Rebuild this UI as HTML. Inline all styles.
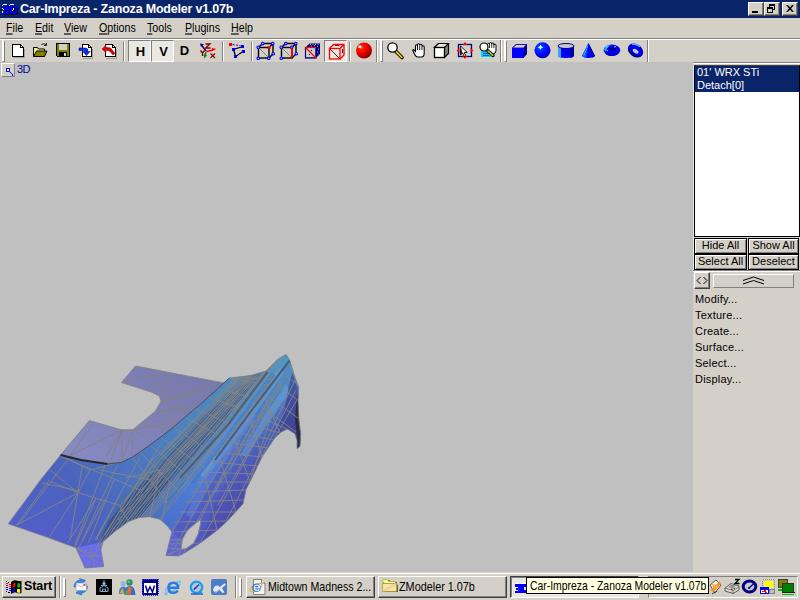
<!DOCTYPE html>
<html>
<head>
<meta charset="utf-8">
<title>Car-Impreza - Zanoza Modeler v1.07b</title>
<style>
html,body{margin:0;padding:0;}
body{width:800px;height:600px;overflow:hidden;background:#d4d0c8;position:relative;font-family:"Liberation Sans",sans-serif;font-size:11px;color:#000;}
.abs{position:absolute;}
#titlebar{left:0;top:0;width:800px;height:18px;background:#0a246a;}
#title{left:20px;top:2px;color:#fff;font-weight:bold;font-size:12.5px;white-space:nowrap;letter-spacing:-0.2px;}
.cap{top:2px;width:16px;height:14px;background:#d4d0c8;box-sizing:border-box;border:1px solid;border-color:#fff #404040 #404040 #fff;box-shadow:inset -1px -1px 0 #808080;}
#menubar{left:0;top:18px;width:800px;height:20px;background:#d4d0c8;}
.mi{top:21px;font-size:11px;white-space:nowrap;transform:scale(0.97,1.13);transform-origin:0 0;}
.mi u{text-decoration:underline;}
#tbline1{left:0;top:38px;width:800px;height:1px;background:#808080;}
#tbline2{left:0;top:39px;width:800px;height:1px;background:#fff;}
#toolbar{left:0;top:40px;width:800px;height:22px;background:#d4d0c8;}
.sep{top:42px;width:1px;height:19px;background:#808080;box-shadow:1px 0 0 #fff;}
.grip{top:42px;width:2px;height:19px;background:#fff;box-shadow:1px 1px 0 #808080;}
.tbchk{top:40px;width:23px;height:22px;box-sizing:border-box;border:1px solid;border-color:#808080 #fff #fff #808080;background:#eae8e3;}
.tbtxt{top:44px;font-weight:bold;font-size:13px;width:23px;text-align:center;}
#viewport{left:0;top:62px;width:693px;height:511px;background:#c0c0c0;overflow:hidden;}
#panel{left:693px;top:62px;width:107px;height:511px;background:#d4d0c8;}
#listbox{left:694px;top:65px;width:106px;height:172px;box-sizing:border-box;background:#fff;border:1px solid #000;border-top-color:#404040;}
.lsel{left:695px;width:104px;height:13px;background:#0a246a;color:#fff;font-size:11px;line-height:13px;white-space:nowrap;padding-left:2px;box-sizing:border-box;}
.btn{height:16px;box-sizing:border-box;border:1px solid #000;background:#d4d0c8;font-size:11px;line-height:13px;text-align:center;white-space:nowrap;box-shadow:inset 1px 1px 0 #fff, inset -1px -1px 0 #808080;}
.pm{left:695px;font-size:11px;white-space:nowrap;letter-spacing:0.2px;}
#taskbar{left:0;top:572px;width:800px;height:28px;background:#d4d0c8;}
.tbtn{top:576px;height:22px;box-sizing:border-box;border:1px solid;border-color:#fff #404040 #404040 #fff;box-shadow:inset -1px -1px 0 #808080;background:#d4d0c8;font-size:12px;white-space:nowrap;}
</style>
</head>
<body>
<!-- TITLE BAR -->
<div id="titlebar" class="abs"></div>
<svg class="abs" style="left:2px;top:3px" width="17" height="12" viewBox="2 3 17 12" shape-rendering="crispEdges">
<path d="M3 6h6v8h-6v-2h3v-1h-2v-2h2v-1h-3z" fill="#000" transform="translate(1,1)"/>
<path d="M10 6h5l2 2v4l-2 2h-5z" fill="#000" transform="translate(1,1)"/>
<path d="M3 5h5l1 1v2l-1 1l1 1v3l-1 1h-6v-2h4v-2h-3v-2h3v-1h-3z" fill="#0000ff"/>
<path d="M10 5h5l2 2v5l-2 2h-5zM12 7v5h2l1-1v-3l-1-1z" fill="#0000ff" fill-rule="evenodd"/>
<path d="M3 4h4v1h-4zM2 5h1v1h-1zM2 8h1v1h-1zM3 9h1v1h-1zM2 11h1v2h-1zM10 4h4v1h-4zM9 5h1v1h-1zM13 8h1v2h-1zM12 10h1v1h-1z" fill="#fff"/>
</svg>
<div id="title" class="abs">Car-Impreza - Zanoza Modeler v1.07b</div>
<div class="abs cap" style="left:748px"></div>
<div class="abs cap" style="left:764px"></div>
<div class="abs cap" style="left:782px"></div>
<svg class="abs" style="left:748px;top:2px" width="50" height="14" viewBox="0 0 50 14" shape-rendering="crispEdges">
<rect x="4" y="9" width="6" height="2" fill="#000"/>
<path d="M21 2h6v6h-2v-1h1v-3h-4v1h-1z" fill="#000"/>
<path d="M19 5h6v6h-6zM20 7v3h4v-3z" fill="#000" fill-rule="evenodd"/>
<path d="M38 3h2l2 2.500 2-2.500h2l-3 3.500 3 3.500h-2l-2-2.500-2 2.500h-2l3-3.500z" fill="#000" shape-rendering="auto"/>
</svg>

<!-- MENU BAR -->
<div id="menubar" class="abs"></div>
<div class="abs mi" style="left:6px"><u>F</u>ile</div>
<div class="abs mi" style="left:35px"><u>E</u>dit</div>
<div class="abs mi" style="left:64px"><u>V</u>iew</div>
<div class="abs mi" style="left:99px"><u>O</u>ptions</div>
<div class="abs mi" style="left:147px"><u>T</u>ools</div>
<div class="abs mi" style="left:185px"><u>P</u>lugins</div>
<div class="abs mi" style="left:231px"><u>H</u>elp</div>

<!-- TOOLBAR -->
<div id="tbline1" class="abs"></div>
<div id="tbline2" class="abs"></div>
<div id="toolbar" class="abs"></div>
<!--TB_START--><!-- toolbar grips / separators -->
<div class="abs grip" style="left:2px;top:40px;height:21px"></div>
<div class="abs sep" style="left:123px"></div>
<div class="abs sep" style="left:222px"></div>
<div class="abs sep" style="left:251px"></div>
<div class="abs sep" style="left:349px"></div>
<div class="abs sep" style="left:376px;top:40px;height:22px"></div>
<div class="abs grip" style="left:380px;top:40px;height:21px"></div>
<div class="abs sep" style="left:500px;top:40px;height:22px"></div>
<div class="abs grip" style="left:504px;top:40px;height:21px"></div>
<div class="abs sep" style="left:647px;top:40px;height:22px"></div>
<!-- checked buttons -->
<div class="abs tbchk" style="left:128px"></div>
<div class="abs tbchk" style="left:151px"></div>
<div class="abs tbchk" style="left:324px"></div>
<div class="abs tbtxt" style="left:129px;top:44px">H</div>
<div class="abs tbtxt" style="left:152px;top:44px">V</div>
<div class="abs tbtxt" style="left:173px;top:43px">D</div>
<svg class="abs" style="left:0;top:39px" width="660" height="24" viewBox="0 39 660 24">
<!-- new -->
<g shape-rendering="crispEdges">
<path d="M12.5 44.5h8l3 3v9h-11z" fill="#fff" stroke="#000"/>
<path d="M20.5 44.5v3h3" fill="none" stroke="#000"/>
<path d="M13 57.5h11.5v-9" fill="none" stroke="#808080" opacity="0.6"/>
</g>
<!-- open -->
<g>
<path d="M33.5 47.5h4l1 1.5h6v7h-11z" fill="#f4f08c" stroke="#000" stroke-width="1"/>
<path d="M33.5 56.5l3-5.5h10.5l-2.5 5.5z" fill="#808000" stroke="#000" stroke-width="1"/>
<path d="M41.5 44.5q3-1.8 4.5 0.5M46.5 43v2.5h-2.5" fill="none" stroke="#202020" stroke-width="1"/>
</g>
<!-- save -->
<g shape-rendering="crispEdges">
<path d="M56.5 43.5h13v13h-12l-1-1z" fill="#808000" stroke="#000"/>
<rect x="59" y="44" width="8" height="6" fill="#d4d0c8"/>
<rect x="59" y="52" width="8" height="5" fill="#000"/>
<rect x="64" y="53" width="2" height="3" fill="#d4d0c8"/>
</g>
<!-- import -->
<g>
<path d="M82.5 44.5h6l3 3v9h-9z" fill="#fff" stroke="#000" shape-rendering="crispEdges"/>
<path d="M88.5 44.5v3h3" fill="none" stroke="#000" shape-rendering="crispEdges"/>
<path d="M83 58h9.5v-9" fill="none" stroke="#808080" opacity="0.6" shape-rendering="crispEdges"/>
<path d="M79 48h6.5q2.5 0 2.5 3v0.5h2.2l-3.7 4-3.7-4h2.2q0-1-1-1h-5z" fill="#0030e8" stroke="#000080" stroke-width="0.5"/>
</g>
<!-- export -->
<g>
<path d="M105.5 44.5h7l3 3v9h-10z" fill="#fff" stroke="#000" shape-rendering="crispEdges"/>
<path d="M112.5 44.5v3h3" fill="none" stroke="#000" shape-rendering="crispEdges"/>
<path d="M106 58h10.500v-9" fill="none" stroke="#808080" opacity="0.6" shape-rendering="crispEdges"/>
<path d="M102 49l4-3.700v2.200h2.500q2 0 3.500 2l3 4-2 1.500-3-3.500q-1-1-2-1h-2v2.200z" fill="#d80000" stroke="#800000" stroke-width="0.5"/>
</g>
<!-- axes -->
<g fill="none">
<path d="M206 51L201.500 45" stroke="#000080" stroke-width="1.4"/>
<path d="M200 43.500l4 0.800-3 2.700z" fill="#000080"/>
<path d="M205.500 44h4.500l-4.500 4h5" stroke="#800000" stroke-width="1.3"/>
<path d="M206.500 51.500L213 50" stroke="#ff0000" stroke-width="1.3"/>
<path d="M216.500 49l-4.500-1v3z" fill="#ff0000"/>
<path d="M200.500 50.500l2 2.500 2-2.500M202.500 53v3" stroke="#800000" stroke-width="1.3"/>
<path d="M206 52L205 55" stroke="#008000" stroke-width="1.4"/>
<path d="M203.500 54l3.500 1-2.500 3.500z" fill="#008000"/>
<path d="M210.500 53.500l4.500 4.500M215 53.500l-4.500 4.500" stroke="#800000" stroke-width="1.1"/>
</g>
<!-- polygon -->
<g>
<path d="M243 46.500L233.500 49.500L235.500 56.500L243 51.500" fill="none" stroke="#000" stroke-width="1.3"/>
<path d="M232.500 44.500L240.500 45.700" stroke="#0000ff" stroke-width="1" stroke-dasharray="2 1.500" fill="none"/>
<g shape-rendering="crispEdges">
<rect x="229" y="43" width="3" height="3" fill="#ff0000"/>
<rect x="241" y="45" width="3" height="3" fill="#0000ff"/>
<rect x="232" y="48" width="3" height="3" fill="#0000ff"/>
<rect x="242" y="50" width="3" height="3" fill="#0000ff"/>
<rect x="234" y="55" width="3" height="3" fill="#0000ff"/>
</g>
</g>
<!-- cube1 -->
<g id="cubeA" fill="none" stroke="#000" stroke-width="1.4">
<rect x="258.500" y="47.500" width="10.500" height="10.500"/>
<path d="M258.500 47.500l4-4h10.500v10.500l-4 4M269 47.500l4-4"/>
<path d="M259 48l10 10" stroke="#808080" stroke-width="1"/>
</g>
<g fill="#c8d0f0" stroke="#0000ff" stroke-width="1.100">
<circle cx="258.25" cy="47.25" r="1.300"/><circle cx="262.75" cy="43.55" r="1.300"/><circle cx="272.75" cy="43.55" r="1.300"/>
<circle cx="273.25" cy="53.75" r="1.300"/><circle cx="258.25" cy="58.25" r="1.300"/><circle cx="268.75" cy="58.25" r="1.300"/>
</g>
<rect x="267.500" y="46" width="3" height="3" fill="#ff0000"/>
<!-- cube2 -->
<g fill="none" stroke="#000" stroke-width="1.4">
<rect x="281.500" y="47.500" width="10.500" height="10.500"/>
<path d="M281.500 47.500l4-4h10.500v10.500l-4 4M292 47.500l4-4"/>
<path d="M282 48l10 10" stroke="#808080" stroke-width="1"/>
</g>
<g fill="#c8d0f0" stroke="#0000ff" stroke-width="1.100">
<circle cx="281.25" cy="47.25" r="1.300"/><circle cx="285.75" cy="43.55" r="1.300"/><circle cx="295.75" cy="43.55" r="1.300"/>
<circle cx="296.25" cy="53.75" r="1.300"/><circle cx="281.25" cy="58.25" r="1.300"/><circle cx="291.75" cy="47.25" r="1.300"/>
</g>
<path d="M291.700 47.500v11" stroke="#ff0000" stroke-width="1.500"/>
<!-- cube3 navy -->
<g>
<path d="M305.500 47.500l4-4h10.500v10.500l-4 4h-10.500z" fill="#000080"/>
<rect x="306" y="48" width="9.500" height="9.500" fill="#d4d0c8"/>
<path d="M310 44.500h9M311 46h1M314 45.500h1M317 46.500h1M318 49h1M317 52h1M318.500 54h0.500" stroke="#d4d0c8" stroke-width="0.8" stroke-dasharray="1 1.500"/>
<rect x="305.500" y="47.500" width="10.500" height="10.500" fill="none" stroke="#000080" stroke-width="1.200"/>
<path d="M305.500 47.500h10.500M305.500 47.500l10.500 10.500" stroke="#ff0000" stroke-width="1.200" fill="none"/>
<rect x="311" y="50" width="1" height="1" fill="#000080"/><rect x="309" y="54" width="1" height="1" fill="#000080"/>
</g>
<!-- cube4 red (checked) -->
<g fill="none" stroke="#ff0000" stroke-width="1.300">
<rect x="329.500" y="48.500" width="10.500" height="10.500"/>
<path d="M329.500 48.500l4-4h10.500v10.500l-4 4M340 48.500l4-4"/>
<path d="M330 49l10 10" stroke="#800000" stroke-width="1"/>
<path d="M335 45.500h4M342.500 49v4" stroke="#800000" stroke-width="1"/>
</g>
<!-- red sphere -->
<defs>
<radialGradient id="rs" cx="0.32" cy="0.3" r="0.8"><stop offset="0" stop-color="#ffb0a0"/><stop offset="0.15" stop-color="#ff2000"/><stop offset="0.55" stop-color="#e00000"/><stop offset="1" stop-color="#780000"/></radialGradient>
<radialGradient id="bs" cx="0.35" cy="0.32" r="0.8"><stop offset="0" stop-color="#c0ffff"/><stop offset="0.15" stop-color="#0040ff"/><stop offset="0.6" stop-color="#0000ff"/><stop offset="1" stop-color="#0000a0"/></radialGradient>
</defs>
<circle cx="364" cy="50.500" r="8" fill="url(#rs)"/>
<rect x="358.500" y="45.500" width="2.500" height="2.500" fill="#fff"/>
<!-- magnifier -->
<g>
<path d="M396 51.500l6 6" stroke="#000" stroke-width="3.600" stroke-linecap="round"/>
<path d="M396.500 52l5.300 5.300" stroke="#d8d020" stroke-width="1.800" stroke-linecap="round"/>
<circle cx="392.500" cy="47.500" r="4.700" fill="#fff" stroke="#000" stroke-width="1.300"/>
</g>
<!-- hand -->
<path d="M413.500 49.500L415.500 51.500L415.500 46Q415.500 44.800 416.500 44.800Q417.500 44.800 417.500 46L417.500 45Q417.500 43.800 418.600 43.800Q419.700 43.800 419.700 45L419.700 45.400Q419.700 44.200 420.800 44.200Q422 44.200 422 45.500L422 46.800Q422 45.800 423.100 45.800Q424.200 45.800 424.200 47L424.200 53Q424.200 57 421.500 57L418 57Q416 57 415 55L413 51Q412.500 49.500 413.500 49.500Z" fill="#fff" stroke="#000" stroke-width="1.100"/>
<path d="M417.500 46v4M419.700 45.500v4.500M422 46.800v3.200" stroke="#000" stroke-width="0.900"/>
<!-- box -->
<g>
<path d="M434.500 47.500l4-4h10v10l-4 4z" fill="#808080" stroke="#000" stroke-width="1.200"/>
<path d="M434.500 47.500l4-4h10l-4 4z" fill="#e8e8e8" stroke="#000" stroke-width="1.200"/>
<rect x="434.500" y="47.500" width="10" height="10" fill="#fff" stroke="#000" stroke-width="1.300"/>
</g>
<!-- select -->
<g>
<rect x="458.500" y="44.500" width="13" height="12" fill="#d4d0c8" stroke="#000080" stroke-width="1.300"/>
<path d="M465 42l2.500 3h-5zM465 59l2.500-3h-5zM456.500 50.500l3-2.500v5zM473.500 50.500l-3-2.500v5z" fill="#ff0000"/>
<path d="M460.500 46v9l2.200-2 1.500 3.500 1.500-0.700-1.500-3.300h3z" fill="#fff" stroke="#000" stroke-width="0.900"/>
<path d="M460.500 46v9l2-2z" fill="#202020"/>
</g>
<!-- magnifier+hand -->
<g>
<rect x="481" y="51" width="13.500" height="6" fill="#00d8f0"/>
<path d="M483 53.500h8M483 55.500h6" stroke="#0040ff" stroke-width="1"/>
<path d="M487.500 50v-5.500q0-1.200 1-1.200t1 1.200v-0.700q0-1.200 1.100-1.200t1.100 1.200v0.400q0-1.200 1.100-1.200t1.100 1.200v1q0-1 1-1t1.100 1.200v5q0 3.500-3 3.500h-3z" fill="#fff" stroke="#000" stroke-width="1"/><path d="M489.500 44.500v3.500M491.700 44v4M493.900 44.500v3.500" stroke="#000" stroke-width="0.800"/>
<path d="M487.500 50.500l5.500 5" stroke="#000" stroke-width="3.200" stroke-linecap="round"/>
<path d="M488 51l4.800 4.300" stroke="#d8d020" stroke-width="1.600" stroke-linecap="round"/>
<circle cx="484" cy="47" r="4" fill="#fff" stroke="#000" stroke-width="1.200"/>
</g>
<!-- blue cube -->
<g>
<path d="M512 48l4-4h11v10l-3.500 4z" fill="#000090"/>
<path d="M512.500 48l3.700-3.500h10.300l-3 3.500z" fill="#d4d0c8" stroke="#0000c0" stroke-width="0.800"/>
<rect x="512" y="48" width="12" height="10" fill="#0000ff"/>
</g>
<!-- blue sphere -->
<circle cx="542.500" cy="50.300" r="8" fill="url(#bs)"/>
<path d="M540.500 44.500l1 2 2 0.800-2 0.800-1 2-1-2-2-0.800 2-0.800z" fill="#c8ffff"/>
<!-- cylinder -->
<g>
<path d="M558 46v9.500q0 2.500 8 2.500t8-2.500v-9.500z" fill="#0000f0"/>
<path d="M558 46v9.500q0 1.500 3 2.200v-10z" fill="#40a0ff"/>
<path d="M570 47.500v10.300q4-0.500 4-2.300v-9.500z" fill="#0000a0"/>
<ellipse cx="566" cy="46" rx="8" ry="2.500" fill="#c8c8d0" stroke="#000080" stroke-width="1"/>
</g>
<!-- cone -->
<g>
<path d="M588.500 43l6.500 13q-2 2-6.500 2t-6.500-2z" fill="#0000f0"/>
<path d="M588.500 43l-6.500 13q1.500 1.500 4 1.800z" fill="#0060ff"/>
<path d="M587.500 46.500l-4 9.500" stroke="#40e0ff" stroke-width="1" stroke-dasharray="1.500 1"/>
<path d="M588.500 43l6.500 13q-1 1.200-3 1.600z" fill="#0000b0"/>
</g>
<!-- torus -->
<g>
<ellipse cx="612" cy="50.300" rx="8.300" ry="5.700" fill="#0000f0"/>
<path d="M604 49q2-4.500 8-4.500q-5 2-6 7q-1.500-0.500-2-2.500z" fill="#20a0ff"/>
<ellipse cx="612.500" cy="48.700" rx="3.500" ry="1.600" fill="#000080"/>
<path d="M606 47.500l2-1.500M606.500 50l1.500 1M614 47l2-0.500" stroke="#60e8ff" stroke-width="1"/>
<path d="M604.500 53q3 3.500 8 3t7-4q-2 2-7 2.500t-8-1.500z" fill="#0000a8"/>
</g>
<!-- torus 2 -->
<g transform="rotate(35 635.500 50.500)">
<ellipse cx="635.500" cy="50.500" rx="8.300" ry="6.300" fill="#000090"/>
<ellipse cx="635.500" cy="49.800" rx="7.300" ry="5" fill="#0000f0"/>
<ellipse cx="636" cy="51" rx="3.300" ry="1.800" fill="#c8c8d8"/>
<path d="M629 47.500q3-3 8-2.500" stroke="#50c0ff" stroke-width="1.300" fill="none"/>
<path d="M629.500 53.500q4 3.500 10 1" stroke="#000070" stroke-width="1.300" fill="none"/>
</g>
</svg>
<!-- 3D view label -->
<div class="abs" style="z-index:5;left:1px;top:63px;width:14px;height:14px;box-sizing:border-box;background:#d4d0c8;border:1px solid;border-color:#fff #808080 #808080 #fff"></div>
<svg class="abs" style="z-index:5;left:1px;top:63px" width="14" height="14" viewBox="0 0 14 14" shape-rendering="crispEdges">
<rect x="5.500" y="5.500" width="3" height="3" fill="#ffffd0" stroke="#0000ff" stroke-width="1"/>
<path d="M9 9h1v1h-1zM10 10h1v1h-1zM11 11h1v2h-1z" fill="#0000ff"/>
</svg>
<div class="abs" style="z-index:5;left:17px;top:63px;font-size:11px;color:#000098;white-space:nowrap;letter-spacing:-0.700px">3D</div>
<!--TB_END-->

<!-- VIEWPORT -->
<div id="viewport" class="abs">
<!--MODEL_START--><svg class="abs" style="left:0;top:-62px" width="693" height="635" viewBox="0 0 693 635">
<defs>
<linearGradient id="gflap" gradientUnits="userSpaceOnUse" x1="180" y1="365" x2="100" y2="465">
<stop offset="0" stop-color="#7879b1"/><stop offset="1" stop-color="#8688c0"/></linearGradient>
<linearGradient id="gbody" gradientUnits="userSpaceOnUse" x1="280" y1="360" x2="30" y2="540">
<stop offset="0" stop-color="#4a92c6"/><stop offset="0.4" stop-color="#4a82c2"/><stop offset="0.62" stop-color="#4a72c0"/><stop offset="0.8" stop-color="#4a62be"/><stop offset="1" stop-color="#5060c8"/></linearGradient>
<linearGradient id="gright" gradientUnits="userSpaceOnUse" x1="290" y1="365" x2="200" y2="545">
<stop offset="0" stop-color="#4a8ec8"/><stop offset="0.3" stop-color="#4a7cc8"/><stop offset="0.6" stop-color="#4c64c4"/><stop offset="1" stop-color="#5058c4"/></linearGradient>
<linearGradient id="gviolet" gradientUnits="userSpaceOnUse" x1="240" y1="440" x2="275" y2="465">
<stop offset="0" stop-color="#4c4ab0" stop-opacity="0"/><stop offset="1" stop-color="#4a44a4" stop-opacity="0.9"/></linearGradient>
<linearGradient id="gbright" gradientUnits="userSpaceOnUse" x1="285" y1="360" x2="170" y2="520">
<stop offset="0" stop-color="#4a98cc"/><stop offset="0.5" stop-color="#5590dc"/><stop offset="1" stop-color="#4a70d0"/></linearGradient>
<clipPath id="cbody"><path id="pbody" clip-rule="evenodd" fill-rule="evenodd" d="M229.4 378L250 375.6L266 371L277.5 359.4L286 354.4L289.4 359.4L295 377.5L298.8 387.5L298 400L298.8 418.8L300.6 433.8L300 446.3L297 448.8L297 440L295 433.8L287.5 429L281.3 432L275 437.5L270 445L262.5 456L257.5 466L255.8 470L246 489.5L243 503.8L226.5 521.8L217.5 530L199.5 543.5L184.5 553L178.5 556L166 555.5L172 532L167.5 526L160 519.3L149.5 516.7L139 517.5L128.5 521.5L115 531.3L103 541.8L100.8 550L103.8 566.5L85 568L76 547.8L46.5 537L8.3 523.8L40.5 480L60.6 455L81 460L107.5 464L121 462.5L132.5 457L150 445L170 430L187.5 415L202.5 402.5L217.5 388.8ZM201 518.8L187.5 530L182.3 539L180.8 549.5L186 548.8L193.5 543.5L198 534.5L200.3 525.5Z"/></clipPath>
</defs>
<!-- purple flap + lower-left panel -->
<path d="M135.6 366L224 383L217.5 388.8L208.8 397L202.5 402.5L187.5 415L170 430L150 445L132.5 457L121 462.5L107.5 464L81 460L60.6 455L89.4 420.6L121.9 430L132.5 430L155.6 411L161 401L159.4 396L151.3 392L121.5 382.5Z" fill="url(#gflap)"/>
<!-- blue body -->
<use href="#pbody" fill="url(#gbody)"/>
<g clip-path="url(#cbody)">
<!-- flank (right of 2nd ridge) -->
<path d="M289.4 360.600L250 412.500L215 460L172 532L160 560L200 560L310 460L310 380Z" fill="url(#gright)"/>
<path d="M296 385L302 450L250 500L200 545L215 500L250 440Z" fill="url(#gviolet)"/>
<path d="M286 384L262 420L240 455L246 457L268 424L290 392Z" fill="#6aa8e8" opacity="0.450"/>
<!-- bright area between ridges -->
<path d="M267.500 372.500L277.500 359.400L286 354.400L289.400 360.600L250 412.500L215 460L172 532L167.500 526L160 519.300L202 460L225 430Z" fill="url(#gbright)"/>
<path d="M280 368L238 425L200 475L206 478L245 428L284 372Z" fill="#66acec" opacity="0.550"/>
<path d="M272 372L228 432L190 482L194 484L232 435L275 376Z" fill="#3f6fb4" opacity="0.450"/>
<path d="M252 410L225 447L196 490L186 515L192 518L205 492L232 452L256 416Z" fill="#5a8ce4" opacity="0.500"/>
<!-- dark strip -->
<path d="M252 375.500L262 373L217 430L190 460L163 490L139 517.500L128.500 521.500L115 531.300L103 541.800L98 545L110.500 520L137.500 490L164.500 460L191.500 430L205 415Z" fill="#3b5e94" opacity="0.850"/>
<path d="M240 377L252 375.500L205 415L164.500 460L137.500 490L110 520L100 545L92 548L120 500L160 455Z" fill="#44709c" opacity="0.450"/>
<path d="M150 475L170 480L150 505L139 517.500L128.500 521.500L115 531.300L103 541.800L98 545L108 522L128 498Z" fill="#344a80" opacity="0.500"/>
<!-- far right dark -->
<path d="M292 372L300 395L301 450L292 440L284 428L274 440L284 410Z" fill="#3a3a88" opacity="0.600"/>
<path d="M297 395L301 400L301 450L296 450L297 436L295 420Z" fill="#2c2c40"/>
<!-- tab -->
<path d="M76 547.8L103 541.8L100.8 550L103.8 566.5L85 568Z" fill="#686cf2"/>
<path d="M166 555.5L172 532L182 540L180 550L190 545L184.5 553L178.5 556Z" fill="#6068e0" opacity="0.800"/>
<!-- bottom-left sheen -->
<path d="M8 524L46.500 537L76 548L103 541.800L96 530L60 515Z" fill="#585ccc" opacity="0.350"/>
</g>
<g fill="none" stroke="#828282" stroke-width="0.9">
<path d="M135.6 366L224 383M135.6 366L121.5 382.5L151.3 392L159.4 396L161 401L155.6 411L132.5 430L121.9 430L89.4 420.6L60.6 455"/>
<path d="M121.5 382.5L165 372.5M151 390L164 373M151 390L175 375M160 395L175 375M160 395L190 378.8M161 401L210 382.5M161 401L214 387M161 401L210 392M160 402.5L200 409M155.6 410.6L196 407.5M155.6 411L177.5 422.5M143.8 421L177.5 423M155.6 411L190 413M93.8 423L70 455.6M121.9 430L70 455.6M121.9 430L102.5 462.5M121.9 430L110 463M121.9 430L121.9 461M132.5 430L121.9 461M132.5 430L131.9 456M132.5 430L152 441M132.5 430L165 424M140 424L170 430M132.5 430L121.9 430"/>
</g>
<g fill="none" stroke="#868686" stroke-width="0.9" clip-path="url(#cbody)">
<path d="M49.5 480L16.5 525M51 482L78 492.8M78 492.8L120 505.5M16.5 525L78 492.8M78 492.8L49.5 537M78 492.8L90 470M96 498L67.5 543M96 498L75 547M105 499.5L78 549M114 480L88.5 543M120 495L96 540M60 456L140 490M50 470L77.5 492.5M67.5 460L19 524M82.5 465L70 540M105 465L75 545M117.5 465L82.5 540M140 457.5L95 540M160 445L105 535M90 470L120 462M90 470L60.6 455M42 483L80 491M120 505.5L150 470M120 505.5L128 521M100 470L150 480M125 478L160 470M241 377L140 480M250 375.6L150 485M256 374L120 512M262 372L112 530M267.5 372L128 520M246 376.5L135 497M259 373L118 520M252.5 375L146 492M236 377.5L160 455M272 365L160 500M277.5 359.4L165 510M282 357L180 490M238 377.3L152 460M152 460L96 548M240.3 376.8L155.8 460M155.8 460L100.2 545.6M242.6 376.3L159.7 460M159.7 460L104.3 543.2M244.9 375.9L163.5 460M163.5 460L108.5 540.8M247.2 375.4L167.4 460M167.4 460L112.6 538.5M249.5 374.9L171.2 460M171.2 460L116.8 536.1M251.8 374.4L175.1 460M175.1 460L120.9 533.7M254.1 373.9L178.9 460M178.9 460L125.1 531.3M256.4 373.5L182.8 460M182.8 460L129.2 528.9M258.7 373L186.6 460M186.6 460L133.4 526.5M261 372.5L190.5 460M190.5 460L137.5 524.2M263.3 372L194.3 460M194.3 460L141.7 521.8M265.6 371.5L198.2 460M198.2 460L145.8 519.4M267.9 371.1L202 460M202 460L150 517M289.4 360.6L200 470M200 470L160 519M286 355L215 460M215 460L172 532M217.5 388.8L262 400M208 397L250 412M195 409L240 428M184 417L228 440M172 426L215 455M160 437L205 468M150 445L192 480M140 452L180 492M132 457L168 503M160 470L150 516M170 482L162 520M229 378L268 385M240 377L275 380M291 365L225 470M225 470L178 556M293 372L240 470M240 470L200 543M295 380L255 465M255 465L226 521M296 390L262 456M297 400L275 437M288 362L232 445M232 445L190 520M190 520L170 556M284 380L210 500M210 500L184 553M278 400L218 505M270 420L243 503M277 370L297 384M270 380L298 400M262 392L298 418M255 402L296 432M248 412L287 429M240 422L280 433M232 432L274 440M225 442L268 448M218 452L262 457M210 462L258 466M204 472L254 474M198 482L250 482M192 492L246 490M186 502L244 500M180 512L236 512M175 522L226 521M172 532L217 530M168 544L200 543M262 392L280 433M248 412L262 457M232 432L250 482M218 452L236 512M204 472L217 530M280 385L262 420M268 400L246 445M254 420L230 470M240 440L215 492M76 547.8L103.8 566.5M85 568L103 541.8M90 545L95 567.5M80 556L102 556M76 548L104 558M166 555.5L190 545M168 548L186 549M170 540L182 540"/>
</g>
<use href="#pbody" fill="none" stroke="#7c7c84" stroke-width="0.8"/>
<path d="M201 518.8L187.5 530L182.3 539L180.8 549.5L186 548.8L193.5 543.5L198 534.5L200.3 525.5Z" fill="none" stroke="#84848c" stroke-width="0.8"/>
<path d="M107.5 464L121 462.5L132.5 457L150 445L170 430L187.5 415L202.5 402.5L217.5 388.8L229.4 378" fill="none" stroke="#3a3a46" stroke-width="0.9" opacity="0.85"/>
<path d="M60.6 455L81 460L107.5 464" fill="none" stroke="#26262e" stroke-width="2"/>
<path d="M289.4 360.6L250 412.5L215 460" fill="none" stroke="#485060" stroke-width="2" opacity="0.85"/>
<path d="M267.5 372L228 425L180 478" fill="none" stroke="#46506a" stroke-width="2.2" opacity="0.7"/>
</svg>
<!--MODEL_END-->
</div>

<!-- RIGHT PANEL -->
<div id="panel" class="abs"></div>
<div class="abs" style="left:693px;top:62px;width:107px;height:1px;background:#808080"></div><div class="abs" style="left:693px;top:63px;width:107px;height:1px;background:#fff"></div><div class="abs" style="left:693px;top:64px;width:1px;height:206px;background:#e8e6e0"></div>
<div id="listbox" class="abs"></div>
<div class="abs lsel" style="top:66px">01' WRX STi</div>
<div class="abs lsel" style="top:79px">Detach[0]</div>
<div class="abs btn" style="left:694px;top:238px;width:53px">Hide All</div>
<div class="abs btn" style="left:748px;top:238px;width:51px">Show All</div>
<div class="abs btn" style="left:694px;top:254px;width:53px">Select All</div>
<div class="abs btn" style="left:748px;top:254px;width:51px">Deselect</div>
<div class="abs" style="left:693px;top:270px;width:107px;height:1px;background:#808080"></div>
<div class="abs" style="left:693px;top:271px;width:107px;height:1px;background:#fff"></div>
<div class="abs" style="left:694px;top:272px;width:16px;height:17px;box-sizing:border-box;background:#d4d0c8;border:1px solid;border-color:#fff #404040 #404040 #fff;box-shadow:inset -1px -1px 0 #808080"></div>
<svg class="abs" style="left:694px;top:272px" width="16" height="17" viewBox="0 0 16 17"><path d="M6.500 5L3 8.500L6.500 12M9.500 5L13 8.500L9.500 12" fill="none" stroke="#000" stroke-width="1"/></svg>
<div class="abs" style="left:713px;top:274px;width:81px;height:14px;box-sizing:border-box;background:#d4d0c8;border:1px solid;border-color:#fff #808080 #808080 #fff"></div>
<svg class="abs" style="left:713px;top:274px" width="81" height="14" viewBox="0 0 81 14"><path d="M30 6.500L40.500 3L51 6.500M30 10L40.500 6.500L51 10" fill="none" stroke="#000" stroke-width="1"/></svg>
<div class="abs pm" style="top:293px">Modify...</div>
<div class="abs pm" style="top:309px">Texture...</div>
<div class="abs pm" style="top:325px">Create...</div>
<div class="abs pm" style="top:341px">Surface...</div>
<div class="abs pm" style="top:357px">Select...</div>
<div class="abs pm" style="top:373px">Display...</div>

<!-- TASKBAR -->
<div id="taskbar" class="abs"></div>
<div class="abs" style="left:0;top:573px;width:800px;height:1px;background:#fff"></div>
<!--TASK_START--><!-- start button -->
<div class="abs tbtn" style="left:2px;width:54px"></div>
<svg class="abs" style="left:5px;top:579px" width="18" height="16" viewBox="5 579 18 16">
<g shape-rendering="crispEdges">
<rect x="6" y="581" width="1" height="1" fill="#000"/><rect x="6" y="583" width="2" height="1" fill="#ff0000"/><rect x="6" y="585" width="2" height="1" fill="#ff0000"/>
<rect x="6" y="587" width="2" height="1" fill="#0000ff"/><rect x="6" y="589" width="2" height="1" fill="#0000ff"/><rect x="6" y="591" width="1" height="1" fill="#000"/>
<rect x="8" y="582" width="1" height="1" fill="#000"/><rect x="9" y="584" width="2" height="1" fill="#ff0000"/><rect x="9" y="586" width="2" height="1" fill="#ff0000"/><rect x="9" y="588" width="2" height="1" fill="#0000ff"/><rect x="9" y="590" width="2" height="1" fill="#0000ff"/><rect x="8" y="592" width="2" height="1" fill="#000"/>
</g>
<path d="M11 582q3-2.500 5.500-1.500t5 0.500v12q-2.500 0.800-5-0.300t-5.500 1.300z" fill="#000"/>
<path d="M13 583.800q1.500-1.400 2.700-1l-0.500 4q-1.200-0.400-2.600 0.700z" fill="#ff0000"/>
<path d="M17.500 583q1.500 0.600 2.700 0.300v4q-1.200 0.400-3-0.300z" fill="#00c000"/>
<path d="M12.600 589.200q1.400-1.100 2.500-0.700l-0.400 3.800q-1.200-0.400-2.300 0.700z" fill="#0000ff"/>
<path d="M17 588.800q1.600 0.600 3.200 0.300v3.600q-1.600 0.400-3.200-0.400z" fill="#ffff00"/>
</svg>
<div class="abs" style="left:24px;top:579px;font-size:12.500px;font-weight:bold;white-space:nowrap;letter-spacing:-0.100px">Start</div>
<!-- separators -->
<div class="abs" style="left:59px;top:576px;width:1px;height:22px;background:#808080;box-shadow:1px 0 0 #fff"></div>
<div class="abs" style="left:63px;top:578px;width:2px;height:18px;background:#fff;box-shadow:1px 1px 0 #808080"></div>
<div class="abs" style="left:235px;top:576px;width:1px;height:22px;background:#808080;box-shadow:1px 0 0 #fff"></div>
<div class="abs" style="left:239px;top:578px;width:2px;height:18px;background:#fff;box-shadow:1px 1px 0 #808080"></div>
<!-- quick launch icons -->
<svg class="abs" style="left:70px;top:577px" width="162" height="20" viewBox="70 577 162 20">
<!-- outlook express -->
<g>
<path d="M74 587q0-6 6.500-7l-1-1.500 6 2-4 3.500-0.500-1.500q-3 0.500-3.500 4z" fill="#3a8ae0" stroke="#1c5cb0" stroke-width="0.600"/>
<path d="M87.500 586q0 6-6.500 7.500l1 1.500-6-2 4-3.500 0.500 1.500q3-0.800 3.500-4z" fill="#3a8ae0" stroke="#1c5cb0" stroke-width="0.600"/>
<rect x="76" y="583" width="10.500" height="7.500" fill="#f4f4fa" stroke="#8098c0" stroke-width="0.600"/>
<path d="M76 583.500l5 3.500 5.500-3.500" fill="none" stroke="#a8b0c8" stroke-width="0.700"/>
<rect x="83.500" y="584" width="2" height="2" fill="#e06030"/>
</g>
<!-- black icon -->
<g>
<rect x="96" y="579" width="16" height="16" fill="#000"/>
<circle cx="104" cy="583.500" r="1.600" fill="#90c0e0"/>
<path d="M101 585.500h6M100 591.500v-3.500l4-2.500 4 2.500v3.500zM102.500 589h3v2.500h-3z" fill="none" stroke="#80b0d8" stroke-width="0.900"/>
<path d="M103 582l1-1.500 1 1.500" fill="none" stroke="#80b0d8" stroke-width="0.700"/>
</g>
<!-- msn -->
<g>
<circle cx="123" cy="583.500" r="2.600" fill="#98b8d8"/>
<path d="M119 594q-0.500-7 4-7.500t4.500 7.500z" fill="#3880d0"/>
<path d="M119.500 593l3-5 2 6z" fill="#f0a030"/>
<circle cx="129.500" cy="582.500" r="3.200" fill="#2c9070"/>
<circle cx="128.800" cy="581.800" r="1.300" fill="#60c0a0"/>
<path d="M124.500 595q-0.500-8.500 5-9t6 9z" fill="#3070c8"/>
<path d="M126 594.500l2.500-8 3 1-1 7z" fill="#f06820"/>
<path d="M124.500 594l2.500-5 0.500 6z" fill="#40b040"/>
</g>
<!-- word -->
<g shape-rendering="crispEdges">
<rect x="142" y="579" width="16" height="16" fill="#000090"/>
<rect x="144" y="581" width="12" height="12" fill="#fff"/>
<rect x="144" y="581" width="12" height="2" fill="#000090"/>
<path d="M145.500 585.500L147.500 592L150 587L152.500 592L154.500 585.500" fill="none" stroke="#000090" stroke-width="1.500" shape-rendering="auto"/>
<path d="M142 579h16v16h-16z" fill="none" stroke="#3030c0" stroke-dasharray="1 1"/>
</g>
<!-- IE -->
<g>
<ellipse cx="173" cy="587" rx="8.500" ry="3.300" fill="none" stroke="#70c0f8" stroke-width="1.300" transform="rotate(-32 173 587)"/>
<path d="M168.500 587.800h9.500q0-5-4.700-5t-4.800 5q0 5 4.800 5q3.200 0 4.400-2.300" fill="none" stroke="#2a7ce0" stroke-width="2.600"/>
<path d="M165.300 592.500q-0.800 2.500 2.200 1.500" fill="none" stroke="#58b0f0" stroke-width="1.300"/>
<path d="M178 582q3-2 2.500 0.500" fill="none" stroke="#70c0f8" stroke-width="1.200"/>
</g>
<!-- quicktime-like -->
<g>
<circle cx="196.500" cy="587.300" r="5.700" fill="#b8c4d0" stroke="#10a0f0" stroke-width="2.200"/>
<path d="M194 589.500l5-5" stroke="#2040d0" stroke-width="1.400"/>
<path d="M193.500 590l1.500-3 1.500 1.500z" fill="#2040d0"/>
<path d="M191 594h12" stroke="#2038b0" stroke-width="1.200"/>
<path d="M199.500 591l2.500 3" stroke="#10a0f0" stroke-width="2"/>
</g>
<!-- blue square -->
<g>
<rect x="211" y="579" width="16" height="16" rx="2" fill="#4a7cc8"/>
<path d="M213 590q1-5 5-4.500l2 1.500 4-3.500q2-0.500 1.500 1.500l-3.500 3 2.500 4.500-2 0.500-3-3-3 2.500q-2.500 0.500-3.500-2.500z" fill="#e4e8f0"/>
<path d="M214 591q2 1.500 4 0l2-2.500" fill="none" stroke="#a0a8b8" stroke-width="0.800"/>
</g>
</svg>
<!-- task buttons -->
<div class="abs tbtn" style="left:246px;width:129px"></div>
<div class="abs tbtn" style="left:378px;width:129px"></div>
<div class="abs" style="left:510px;top:576px;width:129px;height:22px;box-sizing:border-box;border:1px solid;border-color:#404040 #fff #fff #404040;background:#eae8e3;box-shadow:inset 1px 1px 0 #808080"></div>
<svg class="abs" style="left:249px;top:578px" width="18" height="18" viewBox="249 578 18 18">
<path d="M253.500 579.500h8l3.500 3.500v11.500h-11.500z" fill="#f4f4f0" stroke="#808080" stroke-width="1"/>
<path d="M261.500 579.500v3.500h3.500" fill="#fff" stroke="#606060" stroke-width="0.800"/>
<ellipse cx="256" cy="587.500" rx="6.500" ry="2.600" fill="none" stroke="#e8b020" stroke-width="1.100" transform="rotate(-30 256 587.500)"/>
<circle cx="256.500" cy="587.800" r="4.300" fill="#2468e0"/>
<path d="M254.300 587.800h5.200q0-2.600-2.600-2.600t-2.700 2.600q0 2.700 2.700 2.700q1.700 0 2.400-1.200" fill="none" stroke="#e8f4ff" stroke-width="1.300"/>
</svg>
<div class="abs" style="left:268px;top:580px;font-size:11px;white-space:nowrap;transform:scale(0.965,1.120);transform-origin:0 0">Midtown Madness 2...</div>
<svg class="abs" style="left:381px;top:578px" width="18" height="16" viewBox="381 578 18 16">
<path d="M383.500 582q0-2 2-2h3.500l1.500 2h6v2.500h1v7.500h-14z" fill="#000"/>
<path d="M382.500 581q0-1.500 1.500-1.500h3.500l1.500 2h6.500v2h-11z" fill="#f8f8a0" stroke="#b0a838" stroke-width="0.800"/>
<rect x="382.500" y="583.500" width="14" height="8" fill="#f4e8a0" stroke="#b0a030" stroke-width="0.800"/>
<path d="M383 591l13-7" stroke="#f0c0a0" stroke-width="2.500" opacity="0.600"/>
</svg>
<div class="abs" style="left:399px;top:580px;font-size:11px;white-space:nowrap;transform:scale(0.985,1.120);transform-origin:0 0">ZModeler 1.07b</div>
<!-- active button icon -->
<svg class="abs" style="left:514px;top:582px" width="16" height="12" viewBox="2 3 16 12" shape-rendering="crispEdges">
<path d="M3 5h5l1 1v7l-1 1h-5v-2h3v-1h-2v-2h2v-1h-3z" fill="#0000ff"/>
<path d="M9 5h6l2 2v5l-2 2h-6zM12 8v3h2v-3z" fill="#0000ff" fill-rule="evenodd"/>
<path d="M3 4h4v1h-4zM9 4h5v1h-5z" fill="#fff"/>
</svg>
<div class="abs" style="left:648px;top:576px;width:150px;height:22px;box-sizing:border-box;border:1px solid;border-color:#808080 #fff #fff #808080"></div>
<!-- tooltip -->
<div class="abs" style="left:526px;top:577px;width:183px;height:17px;box-sizing:border-box;border:1px solid #000;background:#ffffe1"></div>
<div class="abs" style="left:530px;top:579px;font-size:11px;white-space:nowrap;transform:scale(0.945,1.120);transform-origin:0 0">Car-Impreza - Zanoza Modeler v1.07b</div>
<!-- tray -->
<svg class="abs" style="left:708px;top:577px" width="90" height="20" viewBox="708 577 90 20">
<!-- orange pen -->
<g>
<path d="M710 585l6-5 5 5-6 8z" fill="#f0f0f0" stroke="#303030" stroke-width="0.800"/>
<path d="M710.500 590l9-8.500 1.500 2.500-8 8z" fill="#f09020"/>
<path d="M711 584l8 1-3 6z" fill="#f8a838" opacity="0.900"/>
<path d="M712 594l5-3" stroke="#303030" stroke-width="1"/>
</g>
<!-- grey device z -->
<g>
<path d="M725 588l6-4.500 8 2.500v4l-6 3.500-8-2.500z" fill="#d8d8d8" stroke="#505050" stroke-width="0.900"/>
<path d="M725 588l8 2.500 6-3.500M733 590.500v3.500" fill="none" stroke="#606060" stroke-width="0.800"/>
<path d="M728 587l4-2.500 4 1.200-4 2.500z" fill="#909090"/>
<rect x="731" y="588.500" width="1.500" height="1.500" fill="#ff0000"/><rect x="733.500" y="587.500" width="1.500" height="1.500" fill="#00a000"/>
<path d="M735 579.500h4l-4 4h4.500" fill="none" stroke="#000" stroke-width="1.300"/>
</g>
<!-- navy Q -->
<g>
<ellipse cx="749.500" cy="586.500" rx="6.300" ry="5.500" fill="#c8c8d0" stroke="#000080" stroke-width="3"/>
<path d="M749 588l5.500-5" stroke="#000080" stroke-width="1.300"/>
<circle cx="749" cy="588" r="1" fill="#000080"/>
</g>
<!-- yellow screen -->
<g shape-rendering="crispEdges">
<rect x="762.500" y="579.500" width="12" height="10" fill="#d4d0c8" stroke="#909090" stroke-dasharray="1 1"/>
<rect x="764" y="581" width="9" height="7" fill="#ffff00"/>
<rect x="769" y="589" width="5" height="4" fill="#c0c0c0" stroke="#808080"/>
<rect x="760.500" y="587.500" width="8" height="6" fill="#fff" stroke="#0000ff" stroke-width="1"/>
<rect x="761" y="588" width="7" height="1.500" fill="#0000ff"/>
<path d="M762 591h2v-1h1v2h2" fill="none" stroke="#ff0000" stroke-width="1"/>
</g>
<!-- monitors -->
<g shape-rendering="crispEdges">
<rect x="778.500" y="579.500" width="9" height="8" fill="#808000" stroke="#404040"/>
<rect x="778" y="589" width="6" height="1.500" fill="#00c000"/>
<rect x="782.500" y="583.500" width="11" height="9" fill="#008000" stroke="#303030" stroke-width="1"/>
<rect x="781.500" y="592" width="13" height="1" fill="#202020"/>
<rect x="782" y="593.500" width="12" height="1.500" fill="#00c000"/>
</g>
</svg>
<!--TASK_END-->
</body>
</html>
